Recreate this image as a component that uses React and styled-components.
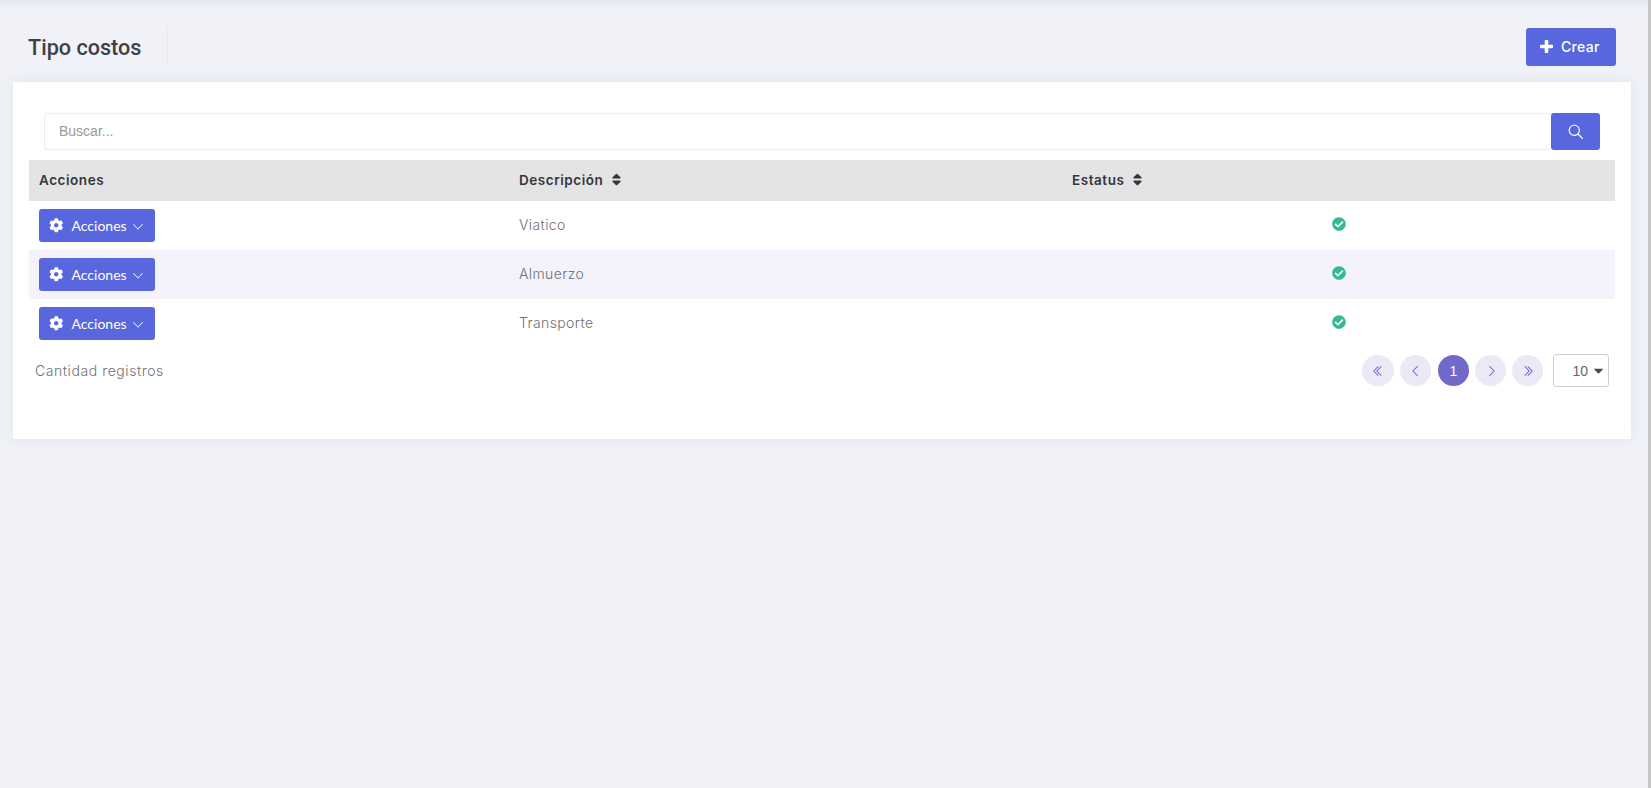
import React from 'react'
import styled, { createGlobalStyle } from 'styled-components'
import { FaCheckCircle, FaCog, FaSort, FaCaretDown } from 'react-icons/fa'
import {
  LiaAngleDownSolid,
  LiaAngleDoubleLeftSolid,
  LiaAngleDoubleRightSolid,
  LiaAngleLeftSolid,
  LiaAngleRightSolid,
  LiaSearchSolid,
} from 'react-icons/lia'

const GlobalStyle = createGlobalStyle`
  html, body {
    margin: 0;
    padding: 0;
    overflow: hidden;
    background: #f0f2f8;
  }
  * { box-sizing: border-box; }
`

const Shell = styled.div`
  display: flex;
  height: 788px;
  background: #f0f2f8;
  box-shadow: inset 0 8px 10px -6px rgba(80, 80, 110, 0.1);
`

const Main = styled.main`
  flex: 1;
  min-width: 0;
`

const ScrollEdge = styled.div`
  width: 3px;
  background: #c6c6c6;
`

const Subheader = styled.header`
  display: flex;
  justify-content: space-between;
  align-items: center;
  padding: 28px 32px 16px 28px;
`

const TitleBlock = styled.div`
  display: flex;
  align-items: center;
  height: 38px;
`

const Title = styled.h1`
  margin: 0;
  width: 140px;
  height: 40px;
  line-height: 42px;
  border-right: 1px solid #e7e8ef;
  font-family: Roboto, sans-serif;
  font-size: 21.6px;
  font-weight: 500;
  color: #3f4047;
`

const BrandButton = styled.button`
  display: inline-flex;
  align-items: center;
  border: 0;
  border-radius: 3px;
  background: #5867dd;
  color: #fff;
  cursor: pointer;
`

const CreateButton = styled(BrandButton)`
  width: 90px;
  height: 38px;
  gap: 8px;
  padding: 0 0 2px 14px;
  font-family: Inter, sans-serif;
  font-size: 14px;
  font-weight: 500;
  letter-spacing: 0.3px;
`

const Card = styled.section`
  height: 357px;
  margin: 0 17px 0 13px;
  padding: 31px 16px 0;
  background: #fff;
  box-shadow: 0 0 13px rgba(82, 63, 105, 0.08);
`

const SearchRow = styled.div`
  display: flex;
  height: 37px;
  margin: 0 15px 10px;
`

const SearchInput = styled.input`
  flex: 1;
  min-width: 0;
  padding: 0 14px 2px;
  border: 1px solid #ebedf2;
  border-right: 0;
  border-radius: 3px 0 0 3px;
  outline: none;
  font-family: 'Liberation Sans', Arial, sans-serif;
  font-size: 14px;
  color: #575962;

  &::placeholder {
    color: #9a9a9a;
    opacity: 1;
  }
`

const SearchButton = styled(BrandButton)`
  justify-content: center;
  width: 49px;
  padding: 0;
  font-size: 18px;

  svg {
    transform: scaleX(-1);
  }
`

const Table = styled.table`
  width: 100%;
  border-collapse: collapse;
  table-layout: fixed;
`

const HeadCell = styled.th`
  width: ${(p) => p.$width}px;
  height: 41px;
  padding: 0 10px 2px;
  background: #e4e4e4;
  text-align: left;
  font-family: Inter, sans-serif;
  font-size: 13.5px;
  font-weight: 600;
  letter-spacing: 0.55px;
  color: #33363d;
`

const SortIcon = styled(FaSort)`
  margin-left: 6px;
  font-size: 15px;
  vertical-align: -2px;
`

const Row = styled.tr`
  height: 49px;
  background: ${(p) => (p.$alt ? '#f4f3fb' : '#fff')};
`

const Cell = styled.td`
  padding: 0 10px ${(p) => p.$lift || 0}px;
  font-family: Inter, sans-serif;
  font-size: 14px;
  font-weight: 300;
  letter-spacing: 0.4px;
  color: #6f6f78;
`

const ActionsButton = styled(BrandButton)`
  width: 116px;
  height: 33px;
  padding: 0 0 0 10px;
  font-family: Lato, sans-serif;
  font-size: 14px;
  vertical-align: middle;
`

const GearIcon = styled(FaCog)`
  margin-right: 8px;
  font-size: 14.5px;
`

const ChevronIcon = styled(LiaAngleDownSolid)`
  margin-left: 5px;
  font-size: 12px;
`

const StatusIcon = styled(FaCheckCircle)`
  display: block;
  margin: 0 auto;
  font-size: 14px;
  color: #33b996;
`

const Footer = styled.div`
  display: flex;
  justify-content: space-between;
  align-items: center;
  height: 33px;
  margin-top: 6px;
  padding: 0 6px;
`

const Count = styled.span`
  font-family: Inter, sans-serif;
  font-size: 14px;
  font-weight: 300;
  letter-spacing: 0.58px;
  color: #6f6f78;
`

const Pager = styled.nav`
  display: flex;
  align-items: center;
`

const PageLink = styled.button`
  display: flex;
  align-items: center;
  justify-content: center;
  width: ${(p) => (p.$first ? 32 : 31)}px;
  height: 31px;
  margin-left: ${(p) => (p.$active ? 1 : 0)}px;
  margin-right: 6px;
  padding: 0;
  border: 0;
  border-radius: 50%;
  background: ${(p) => (p.$active ? '#716aca' : '#ebe9f5')};
  color: ${(p) => (p.$active ? '#fff' : '#5f67d0')};
  font-family: 'Liberation Sans', Arial, sans-serif;
  font-size: 14px;
  cursor: pointer;
`

const PageSize = styled.div`
  display: flex;
  align-items: center;
  justify-content: flex-end;
  gap: 3px;
  width: 56px;
  height: 33px;
  margin-left: 4px;
  padding-right: 2px;
  border: 1px solid #cfcfcf;
  border-radius: 3px;
  font-family: 'Liberation Sans', Arial, sans-serif;
  font-size: 14px;
  color: #666;
`

const PageSizeCaret = styled(FaCaretDown)`
  font-size: 15px;
  color: #4a4a4a;
`

const PlusIcon = () => (
  <svg width="13" height="13" viewBox="0 0 13 13" fill="currentColor">
    <path d="M4.7 1a1 1 0 0 1 1-1h1.6a1 1 0 0 1 1 1v3.7H12a1 1 0 0 1 1 1v1.6a1 1 0 0 1-1 1H8.3V12a1 1 0 0 1-1 1H5.7a1 1 0 0 1-1-1V8.3H1a1 1 0 0 1-1-1V5.7a1 1 0 0 1 1-1h3.7z" />
  </svg>
)

const rows = ['Viatico', 'Almuerzo', 'Transporte']

export default function App() {
  return (
    <>
      <GlobalStyle />
      <Shell>
        <Main>
          <Subheader>
            <TitleBlock>
              <Title>Tipo costos</Title>
            </TitleBlock>
            <CreateButton>
              <PlusIcon />
              Crear
            </CreateButton>
          </Subheader>
          <Card>
            <SearchRow>
              <SearchInput placeholder="Buscar..." />
              <SearchButton aria-label="Buscar">
                <LiaSearchSolid />
              </SearchButton>
            </SearchRow>
            <Table>
              <thead>
                <tr>
                  <HeadCell $width={480}>Acciones</HeadCell>
                  <HeadCell $width={553}>
                    Descripción
                    <SortIcon />
                  </HeadCell>
                  <HeadCell $width={553}>
                    Estatus
                    <SortIcon />
                  </HeadCell>
                </tr>
              </thead>
              <tbody>
                {rows.map((name, i) => (
                  <Row key={name} $alt={i === 1}>
                    <Cell>
                      <ActionsButton>
                        <GearIcon />
                        Acciones
                        <ChevronIcon />
                      </ActionsButton>
                    </Cell>
                    <Cell $lift={2}>{name}</Cell>
                    <Cell $lift={4}>
                      <StatusIcon />
                    </Cell>
                  </Row>
                ))}
              </tbody>
            </Table>
            <Footer>
              <Count>Cantidad registros</Count>
              <Pager>
                <PageLink $first><LiaAngleDoubleLeftSolid /></PageLink>
                <PageLink><LiaAngleLeftSolid /></PageLink>
                <PageLink $active>1</PageLink>
                <PageLink><LiaAngleRightSolid /></PageLink>
                <PageLink><LiaAngleDoubleRightSolid /></PageLink>
                <PageSize>
                  10
                  <PageSizeCaret />
                </PageSize>
              </Pager>
            </Footer>
          </Card>
        </Main>
        <ScrollEdge />
      </Shell>
    </>
  )
}
